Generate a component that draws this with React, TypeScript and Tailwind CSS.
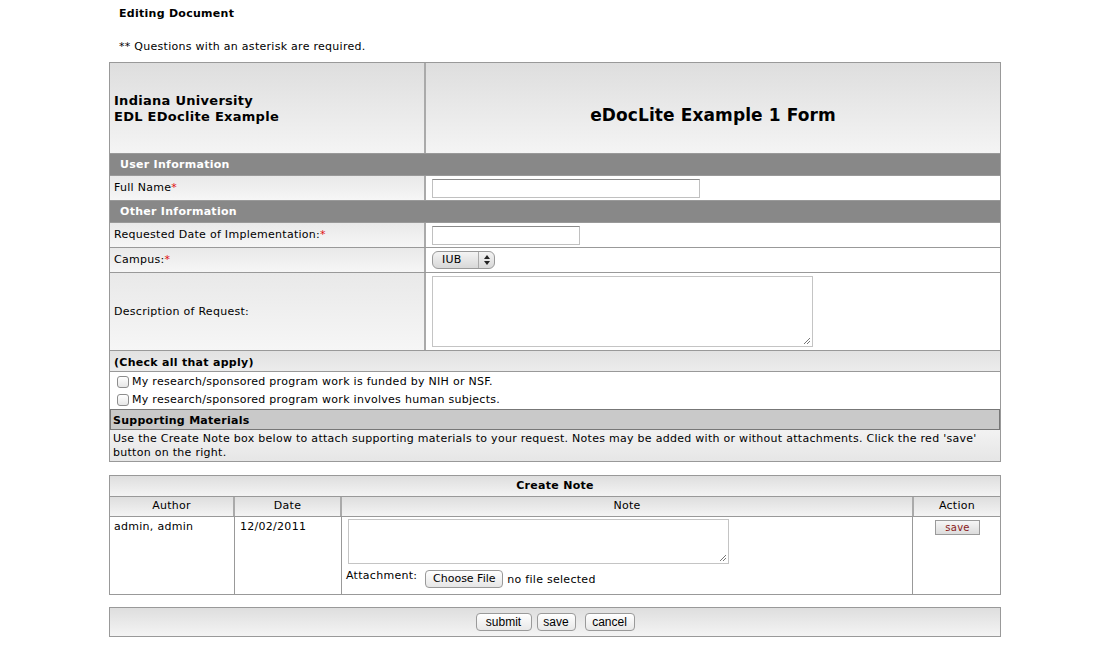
import React from 'react';

const font = { fontFamily: '"DejaVu Sans", Verdana, sans-serif', letterSpacing: '0.28px' };

const labelBg = 'bg-gradient-to-b from-[#e9e9e9] to-[#f6f6f6]';
const headBg = 'bg-gradient-to-b from-[#dedede] to-[#f4f4f4]';

const Req = () => <span className="text-[#e01010]">*</span>;

const SectionBar = ({ title }: { title: string }) => (
  <div className="h-[22px] bg-[#888888] text-white font-bold text-[11px] flex items-center pl-[10px] pt-[2px] border-b border-[#999]">
    {title}
  </div>
);

const FieldRow = ({ label, h, children }: { label: React.ReactNode; h: string; children: React.ReactNode }) => (
  <div className={`flex border-b border-[#999] ${h}`}>
    <div className={`w-[316px] shrink-0 ${labelBg} border-r-2 border-[#aaa] flex items-center pl-[4px] pt-[1px] text-[11px] text-black`}>
      {label}
    </div>
    <div className="flex-1 bg-white pl-[6px] pt-[3px]">{children}</div>
  </div>
);

const TextInput = ({ w }: { w: string }) => (
  <div className={`${w} h-[19px] bg-white border border-[#c0c0c0] border-t-[#8a8a8a]`} />
);

const TextArea = ({ h }: { h: string }) => (
  <div className={`relative w-[381px] ${h} bg-white border border-[#c4c4c4]`}>
    <svg className="absolute right-[1px] bottom-[1px]" width="8" height="8" viewBox="0 0 8 8">
      <path d="M7 1L1 7M7 4L4 7" stroke="#777" strokeWidth="1" />
    </svg>
  </div>
);

const SmallBtn = ({ label, w, cls = '' }: { label: string; w: string; cls?: string }) => (
  <div className={`${w} ${cls} h-[18px] rounded-[4px] border border-[#9a9a9a] bg-gradient-to-b from-white to-[#e8e8e8] flex items-center justify-center text-[12px] text-black tracking-normal`} style={{ fontFamily: '"Liberation Sans Narrow", "Liberation Sans", Arial, sans-serif' }}>
    {label}
  </div>
);

export default function App() {
  return (
    <div className="w-[1110px] h-[655px] bg-white text-black" style={font}>
      <div className="pl-[119px] pt-[6px] text-[11px] font-bold">Editing Document</div>
      <div className="pl-[119px] pt-[16px] text-[11px]">** Questions with an asterisk are required.</div>

      {/* main form */}
      <div className="ml-[109px] mt-[7px] w-[892px] border border-[#999]">
        <div className="flex h-[91px] border-b border-[#999]">
          <div className={`w-[316px] shrink-0 ${headBg} border-r-2 border-[#aaa] flex flex-col justify-center pl-[4px] pt-[1px] text-[13px] font-bold leading-[16px]`}>
            <div>Indiana University</div>
            <div>EDL EDoclite Example</div>
          </div>
          <div className={`flex-1 ${headBg} flex items-center justify-center pt-[15px] text-[17px] font-bold tracking-[0.1px]`}>
            eDocLite Example 1 Form
          </div>
        </div>

        <SectionBar title="User Information" />
        <FieldRow label={<>Full Name<Req /></>} h="h-[25px]">
          <TextInput w="w-[268px]" />
        </FieldRow>

        <SectionBar title="Other Information" />
        <FieldRow label={<>Requested Date of Implementation:<Req /></>} h="h-[25px]">
          <TextInput w="w-[148px]" />
        </FieldRow>
        <FieldRow label={<>Campus:<Req /></>} h="h-[25px]">
          <div className="w-[63px] h-[18px] rounded-[6px] border border-[#999] bg-gradient-to-b from-[#f4f4f4] to-[#d8d8d8] flex items-center text-[11px]">
            <span className="flex-1 pl-[9px]">IUB</span>
            <span className="w-[16px] h-full border-l border-[#aaa] flex flex-col items-center justify-center">
              <svg width="6" height="10" viewBox="0 0 6 10">
                <path d="M3 0L6 4H0Z M3 10L0 6H6Z" fill="#222" />
              </svg>
            </span>
          </div>
        </FieldRow>
        <FieldRow label="Description of Request:" h="h-[78px]">
          <TextArea h="h-[71px]" />
        </FieldRow>

        <div className="h-[21px] bg-gradient-to-b from-[#e2e2e2] to-[#ececec] border-b border-[#999] flex items-center pl-[4px] pt-[4px] text-[11px] font-bold">
          (Check all that apply)
        </div>
        <div className="bg-white pt-[1px] pb-0">
          {['My research/sponsored program work is funded by NIH or NSF.', 'My research/sponsored program work involves human subjects.'].map((t) => (
            <div key={t} className="h-[18px] flex items-center pl-[7px] text-[11px]">
              <span className="w-[12px] h-[12px] rounded-[3px] border border-[#8d8d8d] bg-gradient-to-b from-white to-[#e6e6e6] mr-[3px]" />
              {t}
            </div>
          ))}
        </div>
        <div className="h-[21px] bg-[#c9c9c9] border border-[#777] flex items-center pl-[2px] pt-[3px] text-[11px] font-bold">
          Supporting Materials
        </div>
        <div className="h-[31px] bg-gradient-to-b from-[#f2f2f2] to-[#e6e6e6] px-[3px] pt-[2px] text-[11px] leading-[14px]">
          Use the Create Note box below to attach supporting materials to your request. Notes may be added with or without attachments. Click the red 'save' button on the right.
        </div>
      </div>

      {/* notes */}
      <div className="ml-[109px] mt-[13px] w-[892px] border border-[#999]">
        <div className={`h-[21px] ${headBg} border-b border-[#999] flex items-center justify-center pt-[1px] text-[11px] font-bold`}>
          Create Note
        </div>
        <div className={`flex h-[20px] ${headBg} border-b border-[#999] text-[11px]`}>
          <div className="w-[125px] border-r-2 border-[#aaa] flex items-center justify-center">Author</div>
          <div className="w-[107px] border-r-2 border-[#aaa] flex items-center justify-center">Date</div>
          <div className="flex-1 border-r-2 border-[#aaa] flex items-center justify-center">Note</div>
          <div className="w-[86px] flex items-center justify-center">Action</div>
        </div>
        <div className="flex h-[77px] bg-white text-[11px]">
          <div className="w-[125px] border-r border-[#999] pl-[4px] pt-[2px]">admin, admin</div>
          <div className="w-[107px] border-r border-[#999] pl-[5px] pt-[2px]">12/02/2011</div>
          <div className="flex-1 border-r border-[#999] pl-[6px] pt-[2px]">
            <TextArea h="h-[45px]" />
            <div className="flex items-start mt-[3px] -ml-[2px]">
              <span className="mt-[1px]">Attachment:</span>
              <div className="ml-[8px] mt-[3px] w-[78px] h-[18px] rounded-[4px] border border-[#999] bg-gradient-to-b from-white to-[#e6e6e6] flex items-center justify-center tracking-normal">Choose File</div>
              <span className="ml-[4px] mt-[5px]">no file selected</span>
            </div>
          </div>
          <div className="w-[87px] flex justify-center pt-[3px] pl-[2px]">
            <div className="w-[45px] h-[15px] border border-[#9a9a9a] bg-gradient-to-b from-[#f6f6f6] to-[#dcdcdc] flex items-center justify-center text-[10px] text-[#8a1a1a]">save</div>
          </div>
        </div>
      </div>

      <div className={`ml-[109px] mt-[12px] w-[892px] h-[30px] border border-[#999] ${headBg} flex items-center justify-center gap-[5px]`}>
        <SmallBtn label="submit" w="w-[56px]" />
        <SmallBtn label="save" w="w-[39px]" />
        <SmallBtn label="cancel" w="w-[50px]" cls="ml-[4px]" />
      </div>
    </div>
  );
}
